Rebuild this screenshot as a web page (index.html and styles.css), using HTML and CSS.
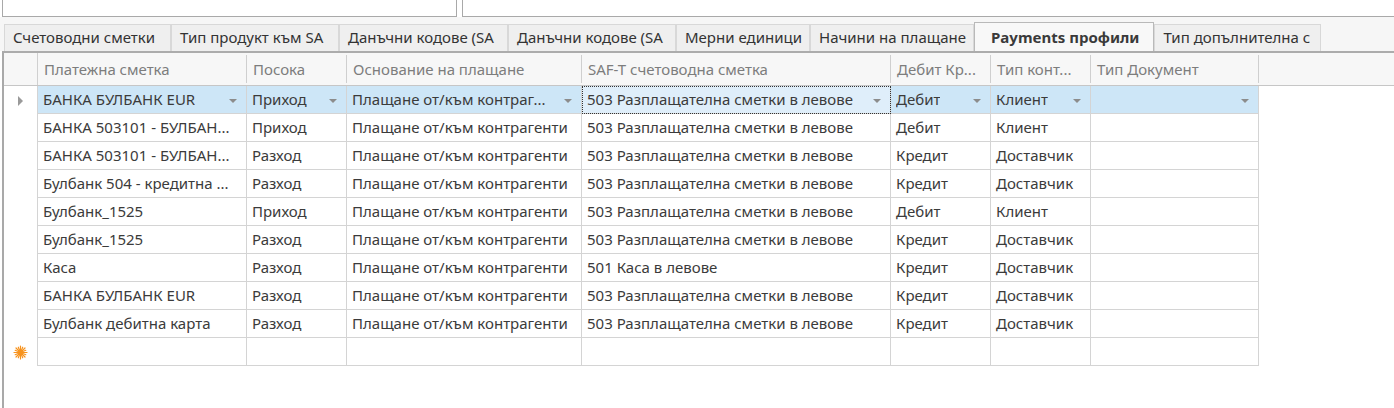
FILE: index.html
```html
<!DOCTYPE html>
<html lang="bg">
<head>
<meta charset="utf-8">
<title>Payments профили</title>
<link rel="stylesheet" href="styles.css">
</head>
<body>
<div class="app">
  <div class="topbar">
    <div class="box box-left"></div>
    <div class="box box-right"></div>
  </div>
  <div class="tabstrip">
    <div class="tab first">Счетоводни сметки</div>
    <div class="tab clip">Тип продукт към SA</div>
    <div class="tab clip wide">Данъчни кодове (SA</div>
    <div class="tab clip">Данъчни кодове (SA</div>
    <div class="tab">Мерни единици</div>
    <div class="tab">Начини на плащане</div>
    <div class="tab active">Payments профили</div>
    <div class="tab clip last">Тип допълнителна с</div>
  </div>
  <div class="grid">
    <div class="row hdr">
      <div class="ind"></div>
      <div class="hc">Платежна сметка</div>
      <div class="hc">Посока</div>
      <div class="hc">Основание на плащане</div>
      <div class="hc">SAF-T счетоводна сметка</div>
      <div class="hc">Дебит Кр...</div>
      <div class="hc">Тип конт...</div>
      <div class="hc">Тип Документ</div>
    </div>
    <div class="row sel">
      <div class="ind"><span class="cur"></span></div>
      <div class="c dd"><span>БАНКА БУЛБАНК EUR</span><i class="arr"></i></div>
      <div class="c dd"><span>Приход</span><i class="arr"></i></div>
      <div class="c dd"><span>Плащане от/към контраг...</span><i class="arr"></i></div>
      <div class="c dd focus"><span>503 Разплащателна сметки в левове</span><i class="arr"></i></div>
      <div class="c dd"><span>Дебит</span><i class="arr"></i></div>
      <div class="c dd"><span>Клиент</span><i class="arr"></i></div>
      <div class="c dd"><span></span><i class="arr"></i></div>
    </div>
    <div class="row">
      <div class="ind"></div>
      <div class="c">БАНКА 503101 - БУЛБАН...</div>
      <div class="c">Приход</div>
      <div class="c">Плащане от/към контрагенти</div>
      <div class="c">503 Разплащателна сметки в левове</div>
      <div class="c">Дебит</div>
      <div class="c">Клиент</div>
      <div class="c"></div>
    </div>
    <div class="row">
      <div class="ind"></div>
      <div class="c">БАНКА 503101 - БУЛБАН...</div>
      <div class="c">Разход</div>
      <div class="c">Плащане от/към контрагенти</div>
      <div class="c">503 Разплащателна сметки в левове</div>
      <div class="c">Кредит</div>
      <div class="c">Доставчик</div>
      <div class="c"></div>
    </div>
    <div class="row">
      <div class="ind"></div>
      <div class="c">Булбанк 504 - кредитна ...</div>
      <div class="c">Разход</div>
      <div class="c">Плащане от/към контрагенти</div>
      <div class="c">503 Разплащателна сметки в левове</div>
      <div class="c">Кредит</div>
      <div class="c">Доставчик</div>
      <div class="c"></div>
    </div>
    <div class="row">
      <div class="ind"></div>
      <div class="c">Булбанк_1525</div>
      <div class="c">Приход</div>
      <div class="c">Плащане от/към контрагенти</div>
      <div class="c">503 Разплащателна сметки в левове</div>
      <div class="c">Дебит</div>
      <div class="c">Клиент</div>
      <div class="c"></div>
    </div>
    <div class="row">
      <div class="ind"></div>
      <div class="c">Булбанк_1525</div>
      <div class="c">Разход</div>
      <div class="c">Плащане от/към контрагенти</div>
      <div class="c">503 Разплащателна сметки в левове</div>
      <div class="c">Кредит</div>
      <div class="c">Доставчик</div>
      <div class="c"></div>
    </div>
    <div class="row">
      <div class="ind"></div>
      <div class="c">Каса</div>
      <div class="c">Разход</div>
      <div class="c">Плащане от/към контрагенти</div>
      <div class="c">501 Каса в левове</div>
      <div class="c">Кредит</div>
      <div class="c">Доставчик</div>
      <div class="c"></div>
    </div>
    <div class="row">
      <div class="ind"></div>
      <div class="c">БАНКА БУЛБАНК EUR</div>
      <div class="c">Разход</div>
      <div class="c">Плащане от/към контрагенти</div>
      <div class="c">503 Разплащателна сметки в левове</div>
      <div class="c">Кредит</div>
      <div class="c">Доставчик</div>
      <div class="c"></div>
    </div>
    <div class="row">
      <div class="ind"></div>
      <div class="c">Булбанк дебитна карта</div>
      <div class="c">Разход</div>
      <div class="c">Плащане от/към контрагенти</div>
      <div class="c">503 Разплащателна сметки в левове</div>
      <div class="c">Кредит</div>
      <div class="c">Доставчик</div>
      <div class="c"></div>
    </div>
    <div class="row">
      <div class="ind">
        <svg class="star" width="15" height="15" viewBox="0 0 15 15">
          <g stroke="#f7931e" stroke-width="1.2" stroke-linecap="round">
            <line x1="7.5" y1="1" x2="7.5" y2="14"/>
            <line x1="1" y1="7.5" x2="14" y2="7.5"/>
            <line x1="3" y1="3" x2="12" y2="12"/>
            <line x1="12" y1="3" x2="3" y2="12"/>
            <line x1="5.3" y1="2.2" x2="9.7" y2="12.8"/>
            <line x1="9.7" y1="2.2" x2="5.3" y2="12.8"/>
            <line x1="2.2" y1="5.3" x2="12.8" y2="9.7"/>
            <line x1="2.2" y1="9.7" x2="12.8" y2="5.3"/>
          </g>
          <circle cx="7.5" cy="7.5" r="2.2" fill="#f7931e"/>
        </svg>
      </div>
      <div class="c"></div>
      <div class="c"></div>
      <div class="c"></div>
      <div class="c"></div>
      <div class="c"></div>
      <div class="c"></div>
      <div class="c"></div>
    </div>
  </div>
</div>
</body>
</html>
```

FILE: styles.css
```css
* { box-sizing: border-box; }
html, body { margin: 0; padding: 0; background: #ffffff; }
body {
  font-family: "Noto Sans", "DejaVu Sans", sans-serif;
  font-size: 15px;
  color: #3b3b3b;
  width: 1394px;
  height: 408px;
  overflow: hidden;
}
.app { display: flex; flex-direction: column; height: 408px; }

.topbar { display: flex; height: 17px; background: #ffffff; }
.box { height: 17px; border: 1px solid #a9a9a9; border-top: none; background: #fff; }
.box-left { margin-left: 2px; width: 455px; }
.box-right { margin-left: 5px; flex: 1; border-right: none; }

.tabstrip {
  display: flex;
  align-items: flex-end;
  height: 34px;
  padding-left: 4px;
  background: #f6f6f6;
}
.tab {
  height: 27px;
  line-height: 25px;
  padding: 0 7px 0 8px;
  background: #efefef;
  border: 1px solid #d8d8d8;
  border-bottom: none;
  white-space: nowrap;
  color: #333;
  flex: none;
}
.tab.first { width: 167px; }
.tab.clip { width: 168px; }
.tab.clip.wide { width: 169px; }
.tab.clip.last { width: 167px; }
.tab.active {
  height: 29px;
  line-height: 28px;
  background: #f8f8f8;
  border-color: #b9b9b9;
  font-weight: bold;
  padding: 0 14px 0 16px;
  color: #3a3a3a;
}

.grid {
  flex: 1;
  margin-left: 2px;
  border-left: 2px solid #a9a9a9;
  border-top: 2px solid #acacac;
  background: #fff;
}
.row {
  display: grid;
  grid-template-columns: 34px 209px 100px 235px 309px 100px 100px 168px;
  height: 28px;
}
.row.hdr {
  height: 33px;
  background: #f7f7f7;
  border-bottom: 1px solid #c6c6c6;
}
.ind {
  border-right: 1px solid #d4d4d4;
  display: flex;
  align-items: center;
  justify-content: center;
}
.hdr .ind { border-right: 1px solid #d0d0d0; }
.hc {
  color: #7d7d7d;
  line-height: 32px;
  padding-left: 6px;
  white-space: nowrap;
  overflow: hidden;
  background: linear-gradient(#cfcfcf, #cfcfcf) right center / 1px 28px no-repeat;
}
.c {
  border-right: 1px solid #d4d4d4;
  border-bottom: 1px solid #d4d4d4;
  line-height: 27px;
  padding-left: 5px;
  white-space: nowrap;
  overflow: hidden;
}
.sel .c { background: #cde6f7; }
.sel .c.focus { background: #dfeefa; outline: 1px dotted #333; outline-offset: -1px; }
.dd { display: flex; justify-content: space-between; align-items: center; padding-right: 9px; }
.dd span { overflow: hidden; }
.arr {
  width: 0; height: 0;
  border-left: 4px solid transparent;
  border-right: 4px solid transparent;
  border-top: 4px solid #8c8c8c;
  flex: none;
  margin-top: 2px;
}
.cur {
  width: 0; height: 0;
  border-top: 5px solid transparent;
  border-bottom: 5px solid transparent;
  border-left: 5px solid #9a9a9a;
  margin-left: -1px;
  margin-top: 1px;
}
.star { display: block; }
```
